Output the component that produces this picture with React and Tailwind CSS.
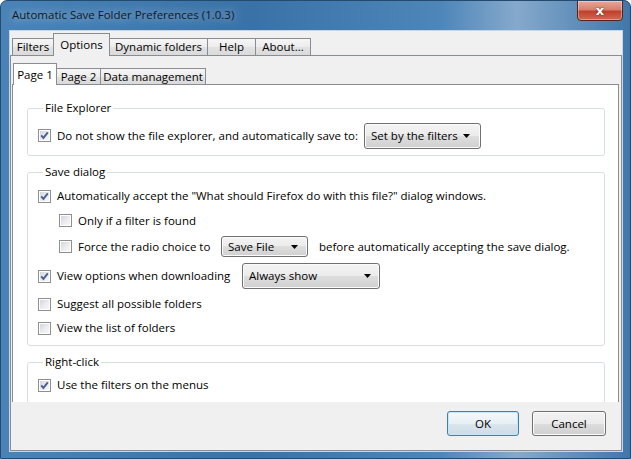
import React from 'react'

const Check = ({ checked }) => (
  <span className="flex h-[13px] w-[13px] shrink-0 items-center justify-center border border-[#8e8f8f] bg-gradient-to-br from-[#cdd1d6] via-[#e9ebee] to-[#fafafa] shadow-[inset_0_0_0_1px_#ffffff]">
    {checked && (
      <svg width="11" height="11" viewBox="0 0 11 11">
        <path d="M2.2 5.4 L4.4 7.9 L8.8 2.4" fill="none" stroke="#4a5f97" strokeWidth="1.9" strokeLinejoin="miter" />
      </svg>
    )}
  </span>
)

const Select = ({ label, className }) => (
  <div className={`flex shrink-0 items-center justify-between gap-[5px] rounded-[3px] border border-[#707070] bg-[linear-gradient(#f4f4f4,#ebebeb_50%,#dedede_50%,#d0d0d0)] pl-[6px] shadow-[inset_0_0_0_1px_#fbfbfb] ${className}`}>
    <span className="whitespace-nowrap">{label}</span>
    <svg width="7" height="4" viewBox="0 0 7 4" className="shrink-0">
      <path d="M0 0h7L3.5 4z" fill="#000" />
    </svg>
  </div>
)

const Row = ({ checked, children, className }) => (
  <div className={`flex items-center ${className}`}>
    <Check checked={checked} />
    {children}
  </div>
)

const Group = ({ title, className, children }) => (
  <fieldset className={`rounded-[3px] border border-[#d5dfe5] px-[10px] ${className}`}>
    <legend className="ml-[5px] px-[2px] leading-[16px]">{title}</legend>
    {children}
  </fieldset>
)

const topTabs = [
  { label: 'Filters', cls: 'w-[41px] h-[17px] border-l border-t' },
  { label: 'Options', cls: 'w-[57px] h-[23px] border-l border-t border-r -mb-px relative z-10 bg-[#f0f0f0]', sel: true },
  { label: 'Dynamic folders', cls: 'w-[97px] h-[17px] border-t' },
  { label: 'Help', cls: 'w-[48px] h-[17px] border-l border-t' },
  { label: 'About...', cls: 'w-[56px] h-[17px] border-l border-t border-r' },
]

const pageTabs = [
  { label: 'Page 1', cls: 'w-[44px] h-[22px] border-l border-t border-r -mb-px relative z-10 bg-white', sel: true },
  { label: 'Page 2', cls: 'w-[43px] h-[16px] border-t' },
  { label: 'Data management', cls: 'w-[106px] h-[16px] border-l border-t border-r' },
]

const tabBg = 'bg-[linear-gradient(#f6f6f6,#ececec_50%,#e2e2e2_50%,#dadada)]'

export default function App() {
  return (
    <div className="flex h-[459px] w-[631px] flex-col overflow-hidden rounded-t-[7px] border border-[#254a6e] bg-[linear-gradient(90deg,#4a83b8,#3a72a7_40%,#4e86ba_70%,#86a9cb_82%,#3f77ab)] pb-[6px] pl-[8px] pr-[7px] font-['Open_Sans',sans-serif] text-[11.5px] text-black">
      {/* title bar */}
      <div className="flex h-[29px] shrink-0 items-start justify-between">
        <div className="pl-[3px] pt-[6px] text-[11.5px] leading-[16px] text-[#0d1a26] [text-shadow:0_0_8px_rgba(255,255,255,0.7)]">
          Automatic Save Folder Preferences (1.0.3)
        </div>
        <div className="-mt-px flex h-[21px] w-[46px] items-center justify-center rounded-b-[4px] border border-[#5b2219] bg-[linear-gradient(#e8a899,#d7806d_45%,#c1402c_55%,#cf6a55)] shadow-[inset_0_0_0_1px_rgba(255,255,255,0.35)]">
          <span className="font-['DejaVu_Sans',sans-serif] text-[13px] font-bold leading-none text-white [text-shadow:0_0_2px_#5b1a10]">x</span>
        </div>
      </div>

      {/* client area */}
      <div className="flex flex-1 flex-col border border-[#c9d5e1] bg-[#f0f0f0]">
        <div className="flex h-[24px] shrink-0 items-end pl-[2px]">
          {topTabs.map((t) => (
            <div
              key={t.label}
              className={`flex items-center justify-center whitespace-nowrap border-[#898c95] leading-[16px] ${t.sel ? '' : tabBg} ${t.cls}`}
            >
              {t.label}
            </div>
          ))}
        </div>

        <div className="flex flex-1 flex-col border border-[#898c95]">
          <div className="flex h-[28px] shrink-0 items-end pl-[2px]">
            {pageTabs.map((t) => (
              <div
                key={t.label}
                className={`flex items-center justify-center whitespace-nowrap border-[#898c95] leading-[16px] ${t.sel ? '' : tabBg} ${t.cls}`}
              >
                {t.label}
              </div>
            ))}
          </div>

          <div className="ml-px mr-[2px] h-[318px] shrink-0 overflow-hidden border border-b-0 border-[#898c95] bg-white pl-[14px] pr-[13px] pt-[15px]">
            <Group title="File Explorer">
              <Row checked className="h-[39px]">
                <span className="ml-[6px] w-[295px] shrink-0 whitespace-nowrap">Do not show the file explorer, and automatically save to:</span>
                <Select label="Set by the filters" className="ml-[12px] h-[26px] w-[117px] pr-[10px]" />
              </Row>
            </Group>

            <Group title="Save dialog" className="mt-[8px] pb-[5px] pt-[4px]">
              <Row checked className="h-[24px]">
                <span className="ml-[6px] whitespace-nowrap">Automatically accept the "What should Firefox do with this file?" dialog windows.</span>
              </Row>
              <Row className="ml-[21px] h-[25px]">
                <span className="ml-[6px] whitespace-nowrap">Only if a filter is found</span>
              </Row>
              <Row className="ml-[21px] h-[27px]">
                <span className="ml-[6px] w-[143px] shrink-0 whitespace-nowrap">Force the radio choice to</span>
                <Select label="Save File" className="h-[21px] w-[87px] pr-[9px]" />
                <span className="ml-[11px] whitespace-nowrap">before automatically accepting the save dialog.</span>
              </Row>
              <Row checked className="h-[32px]">
                <span className="ml-[6px] w-[185px] shrink-0 whitespace-nowrap">View options when downloading</span>
                <Select label="Always show" className="h-[26px] w-[138px] pr-[8px]" />
              </Row>
              <Row className="h-[24px]">
                <span className="ml-[6px] whitespace-nowrap">Suggest all possible folders</span>
              </Row>
              <Row className="h-[24px]">
                <span className="ml-[6px] whitespace-nowrap">View the list of folders</span>
              </Row>
            </Group>

            <Group title="Right-click" className="mt-[8px] pb-[10px] pt-[3px]">
              <Row checked className="h-[24px]">
                <span className="ml-[6px] whitespace-nowrap">Use the filters on the menus</span>
              </Row>
            </Group>
          </div>

          <div className="flex flex-1 items-start justify-end gap-[13px] pr-[15px] pt-[9px]">
            <button className="h-[25px] w-[72px] rounded-[3px] border border-[#3c7fb1] bg-[linear-gradient(#f3f8fb,#e8f0f5_50%,#dbe6ee_50%,#cddbe6)] leading-none shadow-[inset_0_0_0_1px_#c8e6f8]">
              OK
            </button>
            <button className="h-[25px] w-[74px] rounded-[3px] border border-[#707070] bg-[linear-gradient(#f2f2f2,#ebebeb_50%,#dddddd_50%,#cfcfcf)] leading-none shadow-[inset_0_0_0_1px_#fbfbfb]">
              Cancel
            </button>
          </div>
        </div>
      </div>
    </div>
  )
}
